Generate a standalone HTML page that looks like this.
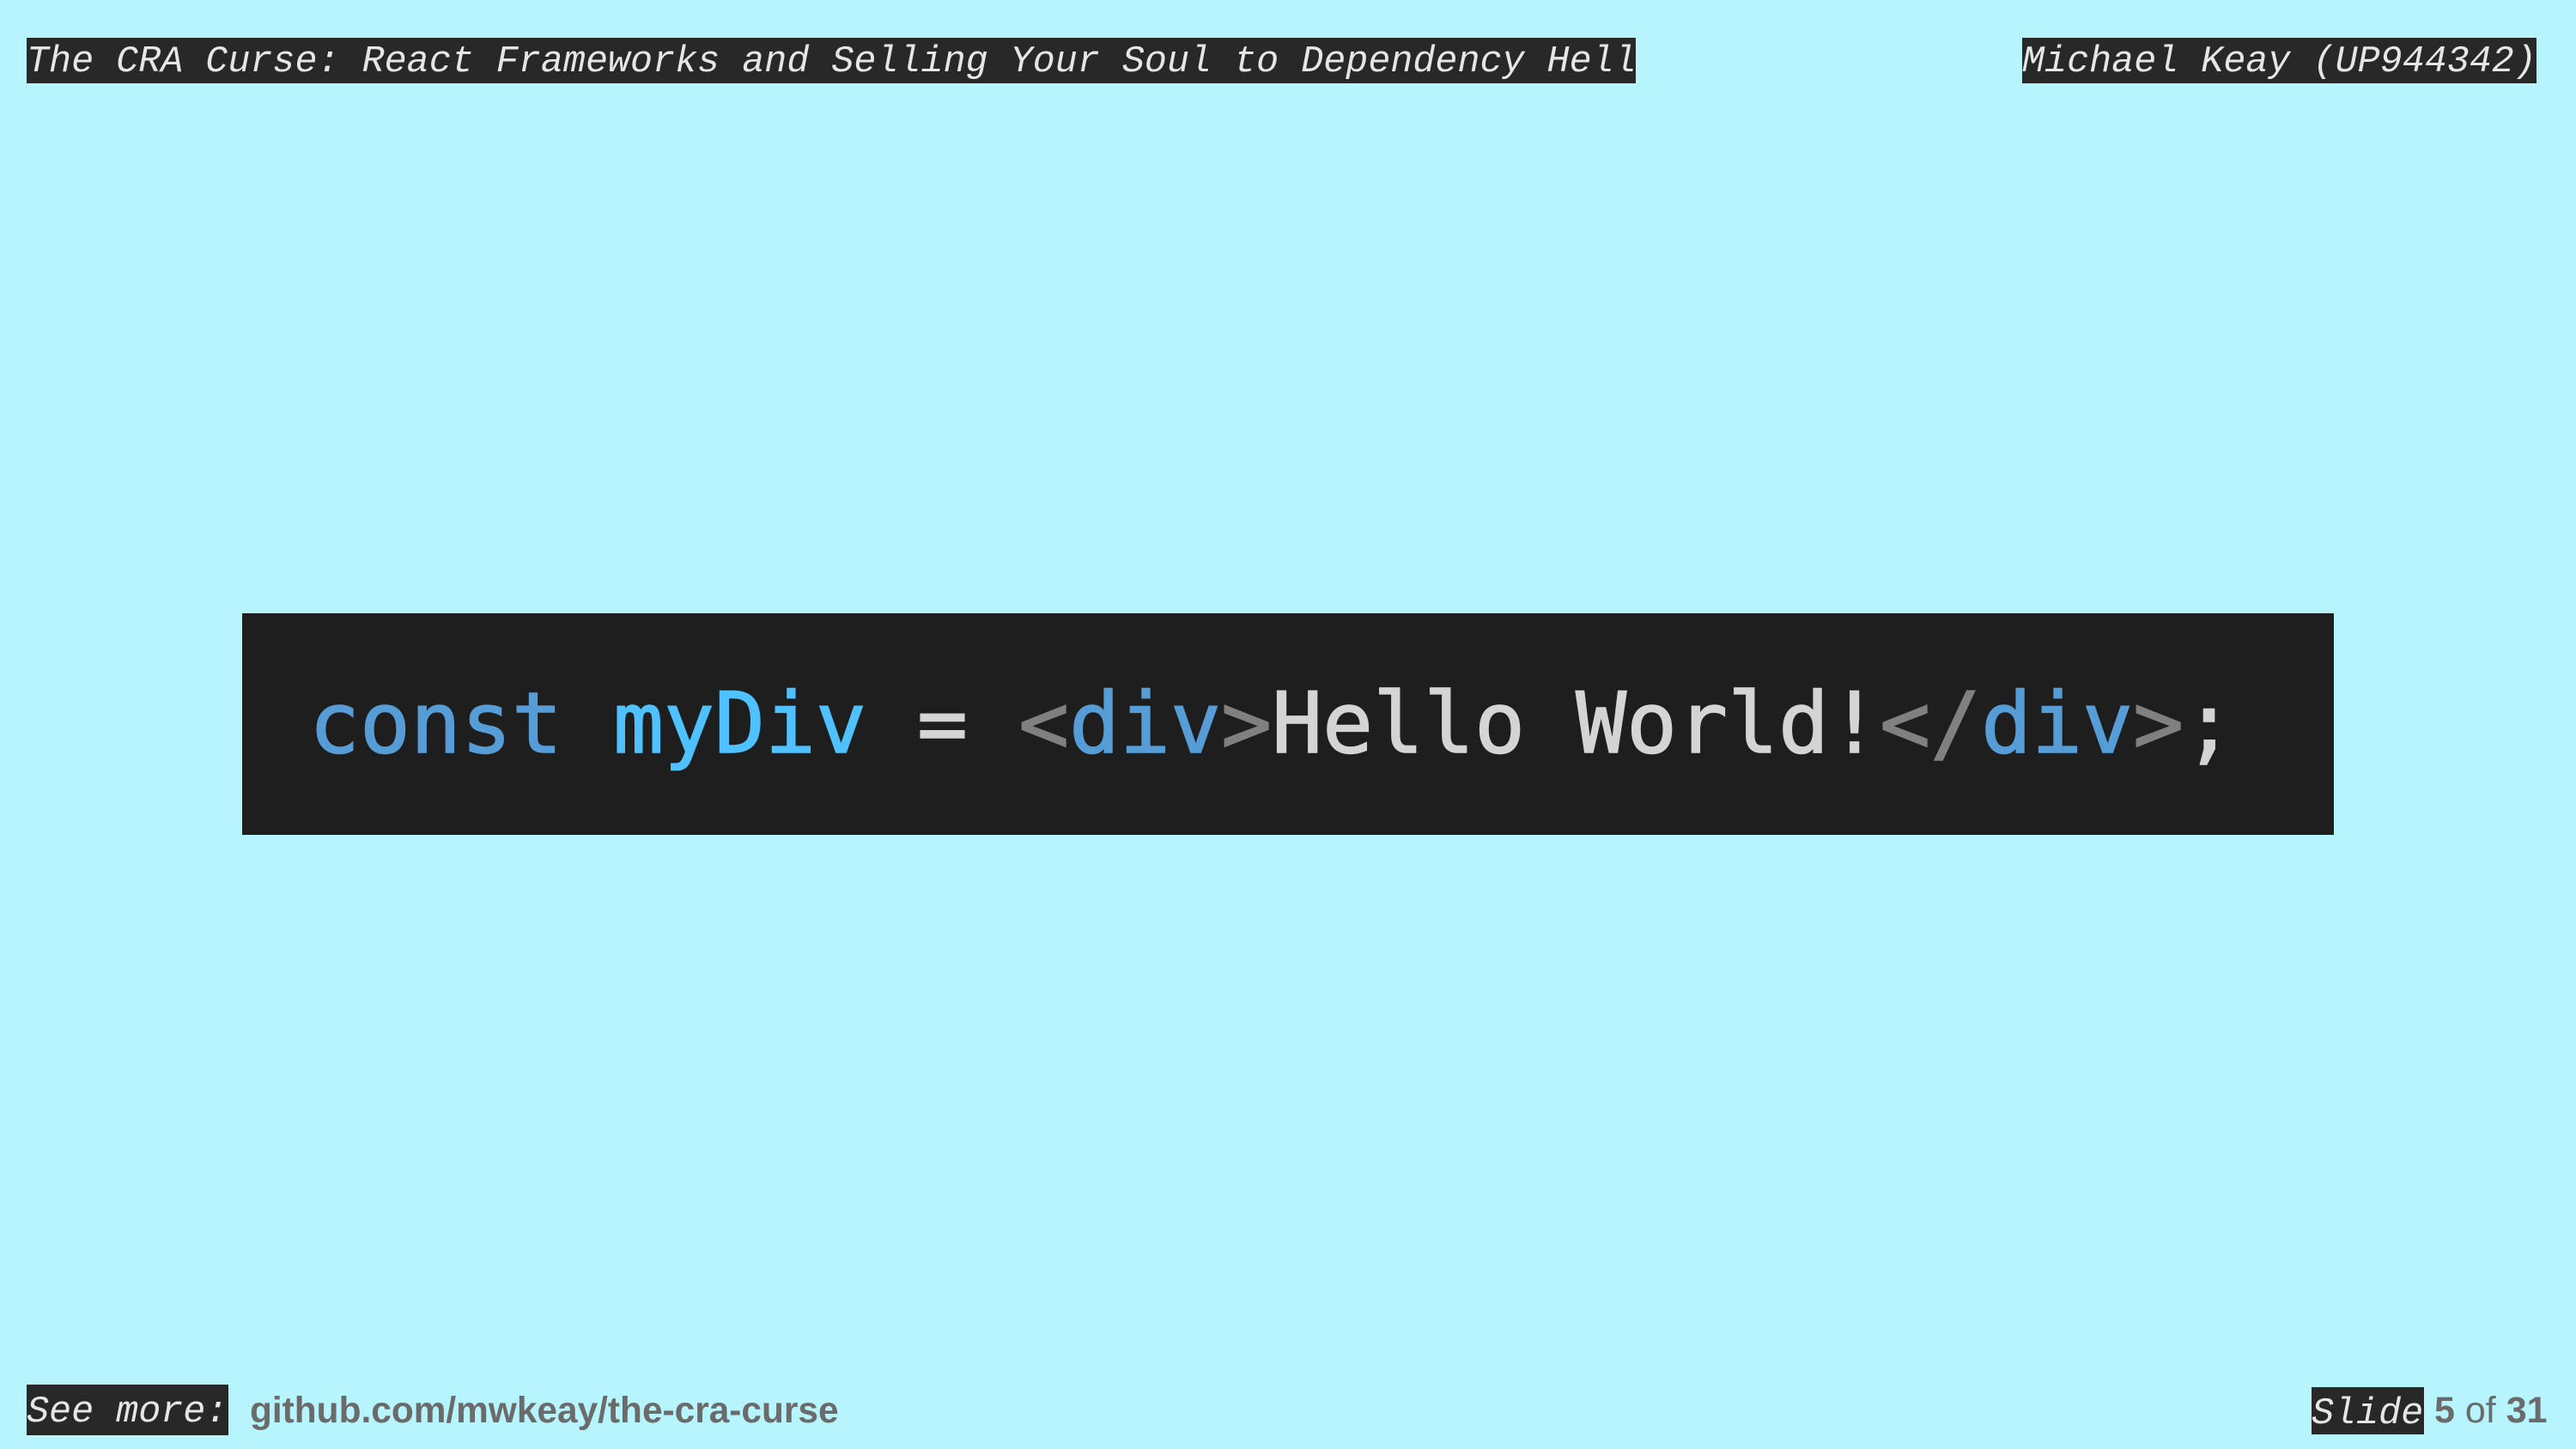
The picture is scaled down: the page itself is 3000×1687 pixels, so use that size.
<!DOCTYPE html>
<html><head><meta charset="utf-8"><style>
html,body{margin:0;padding:0}
body{width:3000px;height:1687px;background:#b6f4fe;position:relative;overflow:hidden}
.lab{position:absolute;background:#282828;color:#e6e6e6;font-family:"Liberation Mono",monospace;font-style:italic;font-size:43.4px;white-space:nowrap;overflow:hidden}
.code{position:absolute;left:282px;top:714px;width:2436px;height:258px;background:#1e1e1e}
.code span.t{position:absolute;left:78px;top:0;line-height:258px;font-family:"DejaVu Sans Mono",monospace;font-size:98px;white-space:pre;color:#d4d4d4;-webkit-text-stroke:1.5px currentColor}
.k{color:#569cd6}.v{color:#4fc1ff}.g{color:#808080}
.ft{position:absolute;font-family:"Liberation Sans",sans-serif;color:#6b6b6b;white-space:nowrap}
</style></head><body>
<div class="lab" style="left:31px;top:44px;width:1874px;height:53px;line-height:58px">The CRA Curse: React Frameworks and Selling Your Soul to Dependency Hell</div>
<div class="lab" style="left:2355px;top:44px;width:599px;height:53px;line-height:58px">Michael Keay (UP944342)</div>
<div class="code"><span class="t"><span class="k">const</span> <span class="v">myDiv</span> = <span class="g">&lt;</span><span class="k">div</span><span class="g">&gt;</span>Hello World!<span class="g">&lt;/</span><span class="k">div</span><span class="g">&gt;</span>;</span></div>
<div class="lab" style="left:31px;top:1612px;width:235px;height:59px;line-height:66px">See more:</div>
<div class="ft" style="left:291px;top:1612px;line-height:60px;font-size:42.4px;font-weight:bold">github.com/mwkeay/the-cra-curse</div>
<div class="lab" style="left:2692px;top:1615px;width:131px;height:55px;line-height:64px">Slide</div>
<div class="ft" style="left:2835px;top:1612px;line-height:60px;font-size:43px"><b>5</b> of <b>31</b></div>
</body></html>
